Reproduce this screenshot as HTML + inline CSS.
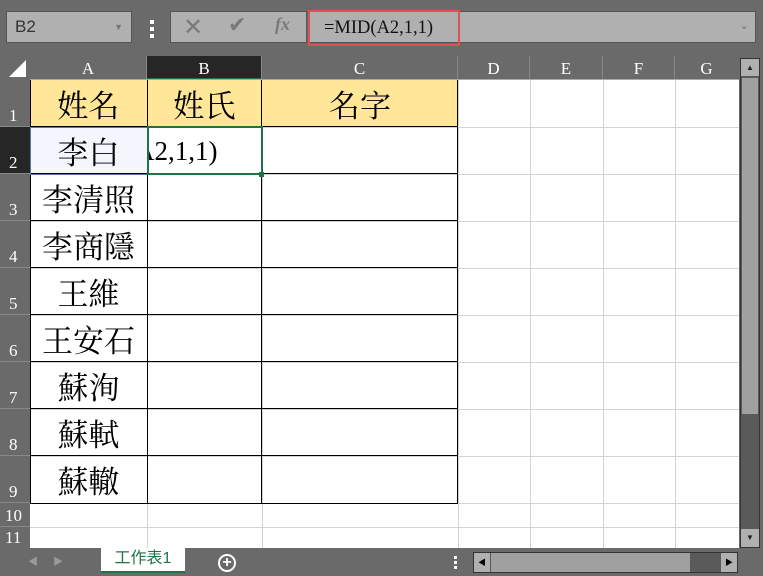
<!DOCTYPE html>
<html><head><meta charset="utf-8"><style>
*{margin:0;padding:0;box-sizing:border-box}
body{width:763px;height:576px;background:#6a6a6a;position:relative;overflow:hidden;font-family:"Liberation Serif","Noto Serif CJK TC",serif}
.a{position:absolute}
.grid{left:30px;top:80px;width:709px;height:468px;background:#fff}
.vl{position:absolute;top:0;width:1px;height:468px;background:#d4d4d4}
.hl{position:absolute;left:0;height:1px;width:709px;background:#d4d4d4}
.ch{position:absolute;top:56px;height:24px;color:#fff;font-size:17px;text-align:center;line-height:26px;border-right:1px solid #888}
.rh{position:absolute;left:0;width:30px;color:#fff;font-size:17px;text-align:left;padding-left:9px;border-bottom:1px solid #888;display:flex;align-items:flex-end;padding-bottom:0}
.c{position:absolute;font-size:31px;text-align:center;font-family:"Noto Serif CJK TC","Liberation Serif",serif;line-height:47px;color:#000}
</style></head><body>
<div class="a" style="left:6px;top:11px;width:126px;height:32px;background:#b0b0b0;border:1px solid #555;font-family:'Liberation Sans',sans-serif;font-size:17px;color:#333;line-height:30px;padding-left:8px">B2<span style="position:absolute;right:8px;top:0;font-size:9px;color:#777">▼</span></div>
<div class="a" style="left:150px;top:20px;width:4px;height:4px;background:#fff"></div>
<div class="a" style="left:150px;top:27px;width:4px;height:4px;background:#fff"></div>
<div class="a" style="left:150px;top:34px;width:4px;height:4px;background:#fff"></div>
<div class="a" style="left:170px;top:11px;width:137px;height:32px;background:#b0b0b0;border:1px solid #555"></div>
<div class="a" style="left:183px;top:13px;font-family:'Liberation Sans',sans-serif;font-size:24px;color:#7a7a7a">✕</div>
<div class="a" style="left:228px;top:13px;font-family:'DejaVu Sans',sans-serif;font-size:22px;color:#7a7a7a">✔</div>
<div class="a" style="left:275px;top:14px;font-style:italic;font-weight:bold;font-size:18px;color:#7a7a7a">fx</div>
<div class="a" style="left:308px;top:11px;width:448px;height:32px;background:#b0b0b0;border:1px solid #555"></div>
<div class="a" style="left:308px;top:10px;width:152px;height:36px;border:2px solid #e05050"></div>
<div class="a" style="left:324px;top:18px;font-size:18.5px;color:#111">=MID(A2,1,1)</div>
<div class="a" style="left:739px;top:18px;font-size:12px;color:#777;font-family:'DejaVu Sans'">⌄</div>
<svg class="a" style="left:8px;top:60px" width="20" height="18"><polygon points="18,0 18,17 1,17" fill="#fff"/></svg>
<div class="ch" style="left:30px;width:117px">A</div>
<div class="ch" style="left:147px;width:115px;background:#262626;border-bottom:2px solid #217346">B</div>
<div class="ch" style="left:262px;width:196px">C</div>
<div class="ch" style="left:458px;width:72px">D</div>
<div class="ch" style="left:530px;width:73px">E</div>
<div class="ch" style="left:603px;width:72px">F</div>
<div class="ch" style="left:675px;width:63px;border:none">G</div>
<div class="a" style="left:30px;top:79px;width:709px;height:1px;background:#aaa"></div>
<div class="a grid">
<div class="vl" style="left:117px"></div><div class="vl" style="left:232px"></div><div class="vl" style="left:428px"></div><div class="vl" style="left:500px"></div><div class="vl" style="left:573px"></div><div class="vl" style="left:645px"></div>
<div class="hl" style="top:47px"></div><div class="hl" style="top:94px"></div><div class="hl" style="top:141px"></div><div class="hl" style="top:188px"></div><div class="hl" style="top:235px"></div><div class="hl" style="top:282px"></div><div class="hl" style="top:329px"></div><div class="hl" style="top:376px"></div><div class="hl" style="top:423px"></div><div class="hl" style="top:447px"></div>
<div class="a" style="left:0;top:0;width:428px;height:47px;background:#ffe699"></div>
<div class="a" style="left:0;top:47px;width:117px;height:47px;background:#f3f6fc"></div>
<div class="a" style="left:0;top:0;width:428px;height:424px;border-right:1px solid #000;border-bottom:1px solid #000"></div>
<div class="a" style="left:117px;top:0;width:1px;height:424px;background:#000"></div>
<div class="a" style="left:231px;top:0;width:1px;height:424px;background:#000"></div>
<div class="a" style="left:0;top:0;width:1px;height:424px;background:#000"></div>
<div class="a" style="left:0;top:46px;width:428px;height:1px;background:#000"></div>
<div class="a" style="left:0;top:93px;width:428px;height:1px;background:#000"></div>
<div class="a" style="left:0;top:140px;width:428px;height:1px;background:#000"></div>
<div class="a" style="left:0;top:187px;width:428px;height:1px;background:#000"></div>
<div class="a" style="left:0;top:234px;width:428px;height:1px;background:#000"></div>
<div class="a" style="left:0;top:281px;width:428px;height:1px;background:#000"></div>
<div class="a" style="left:0;top:328px;width:428px;height:1px;background:#000"></div>
<div class="a" style="left:0;top:375px;width:428px;height:1px;background:#000"></div>
<div class="c" style="left:0;top:0;width:117px">姓名</div>
<div class="c" style="left:117px;top:0;width:115px">姓氏</div>
<div class="c" style="left:232px;top:0;width:196px">名字</div>
<div class="c" style="left:0;top:47px;width:117px">李白</div>
<div class="c" style="left:0;top:94px;width:117px">李清照</div>
<div class="c" style="left:0;top:141px;width:117px">李商隱</div>
<div class="c" style="left:0;top:188px;width:117px">王維</div>
<div class="c" style="left:0;top:235px;width:117px">王安石</div>
<div class="c" style="left:0;top:282px;width:117px">蘇洵</div>
<div class="c" style="left:0;top:329px;width:117px">蘇軾</div>
<div class="c" style="left:0;top:376px;width:117px">蘇轍</div>
<div class="a" style="left:0;top:47px;width:118px;height:48px;border:1px solid #5a78a8"></div>
<div class="a" style="left:117px;top:46px;width:116px;height:49px;border:2px solid #217346;overflow:hidden;font-size:27px;line-height:46px;white-space:nowrap"><span style="position:relative;left:-14px">A2,1,1)</span></div>
<div class="a" style="left:229px;top:92px;width:5px;height:5px;background:#217346"></div>
</div>
<div class="rh" style="top:80px;height:47px">1</div>
<div class="rh" style="top:127px;height:47px;background:#262626">2</div>
<div class="rh" style="top:174px;height:47px">3</div>
<div class="rh" style="top:221px;height:47px">4</div>
<div class="rh" style="top:268px;height:47px">5</div>
<div class="rh" style="top:315px;height:47px">6</div>
<div class="rh" style="top:362px;height:47px">7</div>
<div class="rh" style="top:409px;height:47px">8</div>
<div class="rh" style="top:456px;height:47px">9</div>
<div class="rh" style="top:503px;height:24px;padding-left:5px">10</div>
<div class="rh" style="top:527px;height:21px;padding-left:5px;border:none">11</div>
<div class="a" style="left:740px;top:58px;width:20px;height:490px;background:#5a5a5a;border:1px solid #333"></div>
<div class="a" style="left:741px;top:59px;width:18px;height:17px;background:#b0b0b0;color:#222;font-size:8px;text-align:center;line-height:17px">▲</div>
<div class="a" style="left:742px;top:78px;width:16px;height:336px;background:#a0a0a0"></div>
<div class="a" style="left:741px;top:529px;width:18px;height:18px;background:#b0b0b0;color:#222;font-size:8px;text-align:center;line-height:18px">▼</div>
<div class="a" style="left:28px;top:553px;color:#999;font-size:10px">◀</div>
<div class="a" style="left:53px;top:553px;color:#999;font-size:10px">▶</div>
<div class="a" style="left:101px;top:548px;width:84px;height:25px;background:#fff;border-bottom:2px solid #217346;color:#217346;font-family:'Liberation Sans','Noto Sans CJK TC',sans-serif;font-size:16px;text-align:center;line-height:22px">工作表1</div>
<div class="a" style="left:218px;top:554px;width:18px;height:18px;border:2px solid #fff;border-radius:50%;color:#fff;font-family:'Liberation Sans';font-weight:bold;font-size:16px;text-align:center;line-height:14px">+</div>
<div class="a" style="left:454px;top:556px;width:3px;height:3px;background:#fff"></div>
<div class="a" style="left:454px;top:561px;width:3px;height:3px;background:#fff"></div>
<div class="a" style="left:454px;top:566px;width:3px;height:3px;background:#fff"></div>
<div class="a" style="left:473px;top:552px;width:265px;height:21px;background:#5a5a5a;border:1px solid #333"></div>
<div class="a" style="left:474px;top:553px;width:16px;height:19px;background:#b0b0b0;font-size:8px;line-height:19px;text-align:center">◀</div>
<div class="a" style="left:491px;top:553px;width:199px;height:19px;background:#a0a0a0"></div>
<div class="a" style="left:721px;top:553px;width:16px;height:19px;background:#b0b0b0;font-size:8px;line-height:19px;text-align:center">▶</div>
</body></html>
